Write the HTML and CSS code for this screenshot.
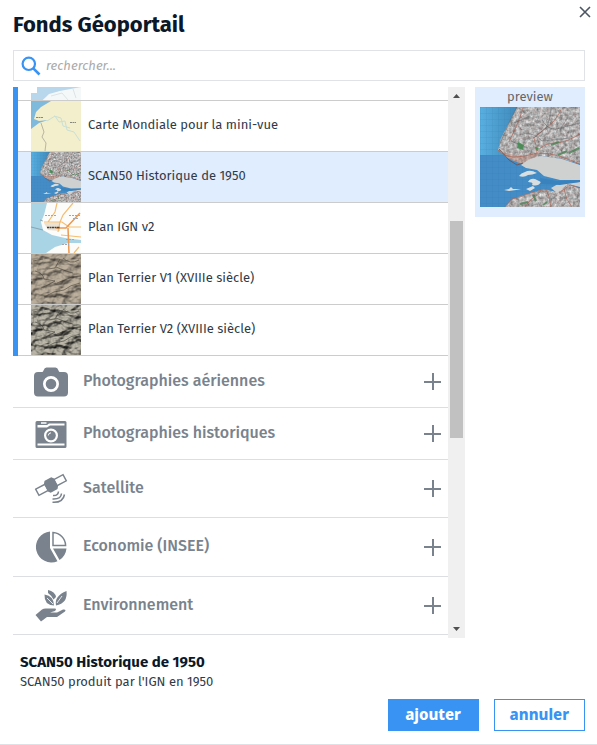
FILE: index.html
```html
<!DOCTYPE html>
<html lang="fr">
<head>
<meta charset="utf-8">
<meta name="viewport" content="width=device-width, initial-scale=1">
<title>Fonds Géoportail</title>
<link rel="stylesheet" href="styles.css">
</head>
<body>
<svg class="defs" aria-hidden="true">
  <defs>
    <filter id="paper" x="0" y="0" width="100%" height="100%" color-interpolation-filters="sRGB">
      <feTurbulence type="fractalNoise" baseFrequency="0.3" numOctaves="4" seed="4" result="n"/>
      <feColorMatrix in="n" type="matrix" values=".6 .08 0 0 0.35  .6 0 .08 0 0.34  .6 0 .08 0 0.34  0 0 0 0 1" result="g"/>
      <feComposite in="g" in2="SourceGraphic" operator="in"/>
    </filter>
    <filter id="relief-a" x="0" y="0" width="100%" height="100%" color-interpolation-filters="sRGB">
      <feTurbulence type="fractalNoise" baseFrequency="0.09 0.14" numOctaves="5" seed="8" result="n"/>
      <feDiffuseLighting in="n" surfaceScale="3" diffuseConstant="1.050" lighting-color="#b5a997"><feDistantLight azimuth="235" elevation="60"/></feDiffuseLighting>
    </filter>
    <filter id="relief-b" x="0" y="0" width="100%" height="100%" color-interpolation-filters="sRGB">
      <feTurbulence type="fractalNoise" baseFrequency="0.09 0.14" numOctaves="5" seed="8" result="n"/>
      <feDiffuseLighting in="n" surfaceScale="5" diffuseConstant="1.050" lighting-color="#b3afa2"><feDistantLight azimuth="235" elevation="60"/></feDiffuseLighting>
    </filter>
    <pattern id="grid" width="6" height="6" patternUnits="userSpaceOnUse"><path d="M0 0H6M0 0V6" stroke="#2c6fa8" stroke-width=".5" opacity=".45"/></pattern>
    <linearGradient id="sea" x2="1"><stop offset="0" stop-color="#58afe0"/><stop offset="1" stop-color="#3e86b8"/></linearGradient>
    <symbol id="scan50" viewBox="0 0 100 100">
      <path fill="url(#sea)" d="M0 0H40V48H0z"/>
      <path fill="#438cc6" d="M0 48H100V100H0z"/>
      <path fill="url(#grid)" d="M0 0H100V100H0z"/>
      <g filter="url(#paper)">
        <path d="M37 0H100V57L82 52 62 49 42 57 34 54 26 50 18 43 21 31 29 16z"/>
        <path d="M25 100L32 92 47 87 64 82 76 85 88 77 100 81V100z"/>
      </g>
      <path fill="#b98475" opacity=".45" d="M18 43L26 46 40 49 58 46 56 50 42 57 34 54 26 50z"/>
      <path fill="#cfd1d1" d="M41 58Q50 50 62 49L82 52 100 58V73L80 73 64 69 57 63 46 61zM71 81L78 77 100 75V80L88 77 77 86z"/>
      <path fill="#d9dfe0" d="M39 69Q41 66 45 65Q50 62 57 66Q52 68 48 68Q44 71 39 69zM48 75Q50 71 55 72L61 75Q58 80 52 78Q54 75 48 75zM24 83L29 82 31 80 33 82 41 82 36 83 29 84zM46 82L53 79 55 81 50 84z"/>
      <path fill="none" stroke="#a9604f" opacity=".65" d="M18 43Q25 50 34 50T57 46Q56 38 54 31L67 20Q75 15 81 3M57 46Q70 46 79 49T100 57M43 0Q40 12 36 20L29 35M57 44Q65 36 75 36T100 27M25 100L32 92Q42 90 47 87L66 82Q70 90 71 100M79 86L90 78 100 81M45 100Q49 93 57 88M84 82Q85 92 92 100"/>
      <path fill="none" stroke="#5d6165" opacity=".5" d="M37 0L29 16 19 39M62 13Q68 23 76 22L100 16M71 0Q70 14 66 21L53 31M43 26Q55 26 62 34L90 31M34 16L50 9M48 41L31 34M80 23L88 10"/>
      <path fill="#3f8b4e" opacity=".85" d="M38 35L44 38 43 43 37 41zM55 40L59 41 57 44z"/>
      <path fill="none" stroke="#4c8256" stroke-width="2" opacity=".8" d="M78 48L87 44M89 46L99 41M71 38L79 35M40 97L48 95M53 88L56 94M67 95L63 98"/>
      <path fill="#3982be" d="M60 71L77 74 100 73V75L80 78 61 77z"/>
      <path fill="none" stroke="#6d4d49" stroke-width=".8" d="M19 42L29 53 37 58 43 56"/>
    </symbol>
  </defs>
</svg>

<main class="dialog">
  <button class="close" type="button" aria-label="Fermer">
    <svg viewBox="0 0 12 12" width="12" height="12"><path d="M1 1L11 11M11 1L1 11" fill="none" stroke="#4b5563" stroke-width="1.600"/></svg>
  </button>
  <h1 class="title">Fonds Géoportail</h1>
  <label class="search">
    <svg viewBox="0 0 20 20" width="20" height="20" aria-hidden="true"><circle cx="7.800" cy="7.800" r="6.200" fill="none" stroke="#3993f3" stroke-width="2.200"/><path d="M12.300 12.300L18.500 18.500" stroke="#3993f3" stroke-width="2.600"/></svg>
    <input class="search-input" type="text" placeholder="rechercher..." aria-label="rechercher">
  </label>

  <div class="content">
    <section class="browser">
      <div class="tree">
        <ul class="layers">
          <li class="layer layer-cut">
            <svg class="thumb" viewBox="0 0 50 50"><path fill="#fff" d="M0 0H50V50H0z"/><path fill="#b9d7ec" d="M6 0H50V40L30 41 18 45 12 50H0V43H6z"/><path fill="#f5f8f9" d="M12 50L18 44 29 41 50 37V50z"/><path fill="none" stroke="#dce3e6" d="M20 46L31 43 37 50M42 39L45 48"/></svg>
          </li>
          <li class="layer">
            <svg class="thumb" viewBox="0 0 50 50"><path fill="#f3eecb" d="M0 0H50V50H0z"/><path fill="#7fb9db" d="M0 0H20L10 6 5 11 3 18 8 20 17 19 8 22 0 28z"/><path fill="none" stroke="#c9e0d6" d="M16 20L24 15 28 21 34 20 36 29 43 31 49 40M23 15L30 17 32 25 39 27"/><path fill="none" stroke="#a9a797" stroke-width=".8" d="M10 22L13 31 11 36 15 42 14 50"/><path stroke="#85887f" stroke-dasharray="2 .5" d="M5 16.500H12M39 21.500H45"/></svg>
            <span>Carte Mondiale pour la mini-vue</span>
          </li>
          <li class="layer selected">
            <svg class="thumb"><use href="#scan50"/></svg>
            <span>SCAN50 Historique de 1950</span>
          </li>
          <li class="layer">
            <svg class="thumb" viewBox="0 0 50 50"><path fill="#fcfcfa" d="M0 0H50V50H0z"/><path fill="#a8d4e6" d="M0 0H16L13 12 10 19 12 27 21 32 34 35 50 37V40L37 40 24 44 15 50H0z"/><path fill="#ece2d2" d="M13 20L29 19 29 28 17 27z"/><path fill="none" stroke="#f5bd70" stroke-width="1.200" d="M26 0L24 9 17 19M42 0L32 12 29 19M13 19H31L38 24H50M30 32L50 34M29 19L27 29M43 50L48 44"/><path fill="none" stroke="#ec9850" stroke-width="1.500" d="M25 25L35 25 49 10M37 25L38 50"/><path fill="none" stroke="#3d4248" stroke-width="1.500" stroke-dasharray="2 .5" d="M16 24.500H29"/><path fill="none" stroke="#a3a6ab" stroke-dasharray="2 1" d="M14 12.500H26M38 12.500H49M42 15.500H47M35 36.500H43M31 41.500H38"/><path fill="none" stroke="#71848d" stroke-width=".6" d="M0 24L12 27M9 17L12 18"/></svg>
            <span>Plan IGN v2</span>
          </li>
          <li class="layer">
            <svg class="thumb" viewBox="0 0 50 50"><rect width="50" height="50" filter="url(#relief-a)"/><path fill="none" stroke="#3f392f" opacity=".55" d="M4 17Q12 19 13 25L24 27 17 31 10 34M13 43L23 38 33 36Q39 31 49 29M25 13L35 17 42 19M26 29L41 23 50 22M29 5L24 14 16 15M32 4Q39 11 48 6M2 7L12 5"/></svg>
            <span>Plan Terrier V1 (XVIIIe siècle)</span>
          </li>
          <li class="layer">
            <svg class="thumb" viewBox="0 0 50 50"><rect width="50" height="50" filter="url(#relief-b)"/><path fill="none" stroke="#35362f" opacity=".55" d="M4 17Q12 19 13 25L24 27 17 31 10 34M13 43L23 38 33 36Q39 31 49 29M25 13L35 17 42 19M26 29L41 23 50 22M29 5L24 14 16 15M32 4Q39 11 48 6M2 7L12 5"/></svg>
            <span>Plan Terrier V2 (XVIIIe siècle)</span>
          </li>
        </ul>

        <button class="category" type="button">
          <svg class="icon" viewBox="0 0 36 36"><path fill="#7a838d" fill-rule="evenodd" d="M5 8H9Q10 8 10.500 6.500Q11.500 3.500 13.500 3.500H22.500Q24.500 3.500 25.500 6.500Q26 8 27 8H31Q35 8 35 12V28.500Q35 32.500 31 32.500H5Q1 32.500 1 28.500V12Q1 8 5 8zM18 12A8 8 0 1 0 18 28A8 8 0 1 0 18 12zM18 14.700A5.300 5.300 0 1 1 18 25.300A5.300 5.300 0 1 1 18 14.700z"/></svg>
          <span>Photographies aériennes</span><i class="plus"></i>
        </button>
        <button class="category" type="button">
          <svg class="icon" viewBox="0 0 36 36"><path fill="#7a838d" fill-rule="evenodd" d="M4 5H32Q33.500 5 33.500 6.500V30.500Q33.500 32 32 32H4Q2.500 32 2.500 30.500V6.500Q2.500 5 4 5zM4.500 9V11.500H14L17 9.500H31.500V7.500H16L14 9zM8 6.200V7.800H13.500V6.200zM4.500 27.500V29.500H31.500V27.500zM18 12.500A7 7 0 1 0 18 26.500A7 7 0 1 0 18 12.500z"/><circle cx="18" cy="19.500" r="4.800" fill="#7a838d"/><path d="M15.300 19.500A2.800 2.800 0 0 1 18 16.800" fill="none" stroke="#fff"/></svg>
          <span>Photographies historiques</span><i class="plus"></i>
        </button>
        <button class="category tall" type="button">
          <svg class="icon" viewBox="0 0 36 36"><g transform="rotate(-28 18 14)" fill="none" stroke="#7a838d" stroke-width="1.400"><path d="M2.500 10.500H13V17.500H2.500zM23 10.500H33.500V17.500H23z"/><path fill="#7a838d" d="M14.500 8H21.500L23 10V18L21.500 20H14.500L13 18V10z"/></g><path fill="none" stroke="#7a838d" stroke-width="1.500" d="M20 24.500Q25 25 25.500 20.500M19.500 28Q28 28.500 28.500 22.500M19.500 31.300Q30 32 31.500 23.500"/></svg>
          <span>Satellite</span><i class="plus"></i>
        </button>
        <button class="category taller" type="button">
          <svg class="icon" viewBox="0 0 36 36"><path fill="#7a838d" d="M17 2.500V19L24.500 32.200A15.500 15.500 0 1 1 17 2.500zM20 19.500H33.500A15.500 15.500 0 0 1 26.500 31z"/><path fill="none" stroke="#7a838d" stroke-width="1.500" d="M20 3.500V16.500H32.600A13.500 13.500 0 0 0 20 3.500z"/></svg>
          <span>Economie (INSEE)</span><i class="plus"></i>
        </button>
        <button class="category tall" type="button">
          <svg class="icon" viewBox="0 0 36 36"><path fill="#7a838d" d="M2.500 27L9 21.500Q11 20 14 20.500H22Q24 21 22 23L17 24.500H24L30 21.500Q33.500 21 32 23.500L24 29H14L8 33.500z"/><path fill="#7a838d" d="M21 17.500Q11 17 11.500 6.500Q21 8 21 17.500zM23 17.500Q21 8 33.500 3Q35 15 23 17.500zM15 5V2Q22 3.500 23 9L20.500 11.500Q18 7 15 5z"/><path fill="none" stroke="#fff" stroke-width=".8" d="M14 10L20 16M24 15L29 8"/></svg>
          <span>Environnement</span><i class="plus"></i>
        </button>
      </div>
      <div class="scrollbar" aria-hidden="true">
        <svg width="7" height="4" viewBox="0 0 7 4"><path fill="#505050" d="M3.500 0L7 4H0z"/></svg>
        <div class="track"><div class="thumb-bar"></div></div>
        <svg width="7" height="4" viewBox="0 0 7 4"><path fill="#505050" d="M0 0H7L3.500 4z"/></svg>
      </div>
    </section>
    <aside class="preview">
      <span>preview</span>
      <svg class="preview-map" viewBox="0 0 100 100"><use href="#scan50"/></svg>
    </aside>
  </div>

  <section class="details">
    <h2 class="details-title">SCAN50 Historique de 1950</h2>
    <p class="details-text">SCAN50 produit par l'IGN en 1950</p>
  </section>
  <footer class="actions">
    <button class="btn primary" type="button">ajouter</button>
    <button class="btn" type="button">annuler</button>
  </footer>
</main>
</body>
</html>
```
FILE: styles.css
```css
* { box-sizing: border-box; }
body { margin: 0; background: #fff; color: #303b48; font: 13px/20px "Fira Sans", "Noto Sans", sans-serif; }
button { font: inherit; cursor: pointer; }
.defs { position: absolute; width: 0; height: 0; }
.dialog { position: relative; padding: 9px 12px 13px 13px; border-bottom: 1px solid #dde0e4; }
.close { position: absolute; top: 6px; right: 6px; display: flex; padding: 0; border: 0; background: none; }
.title { margin: 0 0 9px; color: #0b1829; font-size: 22px; line-height: 32px; font-weight: 700; }
.search { display: flex; align-items: center; gap: 5px; height: 31px; padding: 0 7px; border: 1px solid #dfe2e6; }
.search-input { flex: 1; min-width: 0; padding: 0; border: 0; outline: 0; background: none; font: italic 13px/20px "Fira Sans", "Noto Sans", sans-serif; }
.search-input::placeholder { color: #aaa; opacity: 1; }
.content { display: flex; align-items: flex-start; gap: 10px; margin-top: 6px; }
.browser { flex: 1; display: flex; min-width: 0; }
.tree { flex: 1; min-width: 0; padding-bottom: 3px; }
.layers { margin: 0; padding: 0; list-style: none; border-left: 5px solid #3993f3; }
.layer { display: flex; align-items: center; gap: 7px; height: 51px; padding-left: 13px; border-bottom: 1px solid #ccc; }
.layer span { padding-bottom: 2px; }
.layer-cut { height: 14px; align-items: flex-end; overflow: hidden; }
.selected { background: #e0edff; }
.thumb { flex: none; display: block; width: 50px; height: 50px; }
.category { display: flex; align-items: center; width: 100%; height: 52px; padding: 0 7px 0 20px; border: 0; border-bottom: 1px solid #dbdee3; background: none; color: #7a838d; font-size: 16px; font-weight: 500; text-align: left; }
.category span { flex: 1; padding: 0 0 2px 14px; }
.tall { height: 58px; }
.taller { height: 59px; }
.icon { flex: none; width: 36px; height: 36px; }
.plus { flex: none; width: 17px; height: 17px; background: linear-gradient(#7a838d, #7a838d) center / 17px 2px no-repeat, linear-gradient(#7a838d, #7a838d) center / 2px 17px no-repeat; }
.scrollbar { display: flex; flex-direction: column; align-items: center; justify-content: space-between; width: 17px; padding: 7px 2px; background: #f0f0f0; }
.track { flex: 1; width: 13px; margin: 6px 0; display: flex; flex-direction: column; }
.track::before { content: ""; flex: 117; }
.track::after { content: ""; flex: 183; }
.thumb-bar { flex: 217; background: #c1c1c1; }
.preview { flex: none; width: 110px; padding: 0 5px 10px; background: #e0edff; color: #666; text-align: center; }
.preview span, .preview-map { display: block; }
.preview-map { width: 100px; height: 100px; }
.details { padding: 13px 7px 8px; }
.details-title { margin: 0; color: #0b1829; font-size: 15px; line-height: 22px; font-weight: 700; }
.details-text { margin: 0; line-height: 18px; }
.actions { display: flex; justify-content: flex-end; gap: 15px; }
.btn { min-width: 91px; height: 32px; padding: 0 15px 2px; border: 1px solid #3993f3; background: #fff; color: #3993f3; font: 800 15px/20px "Noto Sans", sans-serif; }
.primary { background: #3993f3; color: #fff; }
```
